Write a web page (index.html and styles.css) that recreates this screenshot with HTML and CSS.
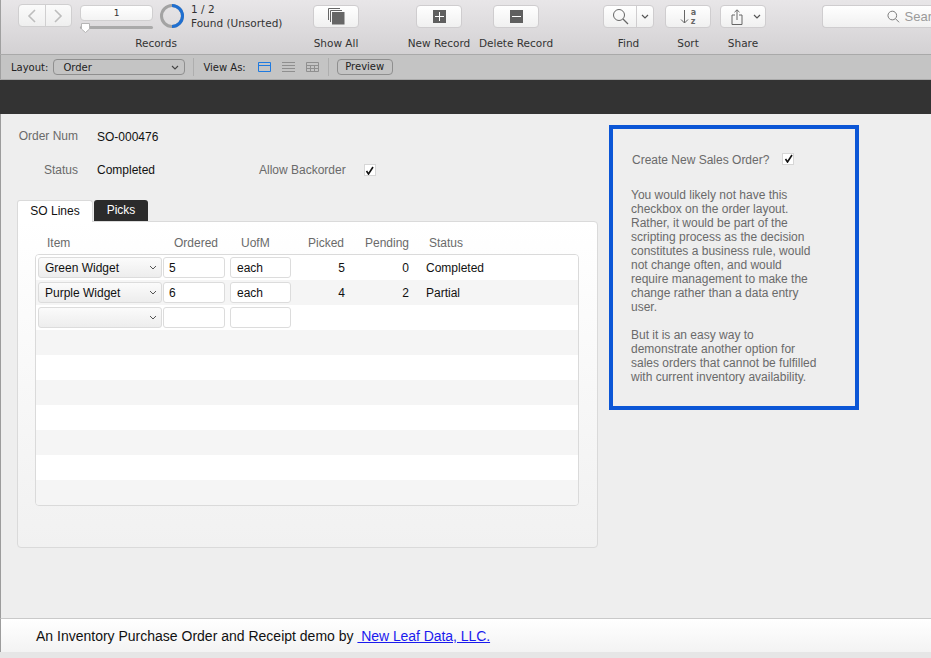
FILE: index.html

```html
<!DOCTYPE html>
<html lang="en">
<head>
  <meta charset="UTF-8">
  <meta name="viewport" content="width=device-width, initial-scale=1.0">
  <title>Order</title>
  <link rel="stylesheet" href="styles.css">
</head>
<body>
  <header class="toolbar">
    <div class="tool tool-records">
      <div class="records-row">
        <div class="nav-btns">
          <span class="nav-half">
            <svg width="10" height="14" viewBox="0 0 10 14"><path d="M8 1 L2 7 L8 13" fill="none" stroke="#bdbdbd" stroke-width="1.6"/></svg>
          </span>
          <span class="nav-half">
            <svg width="10" height="14" viewBox="0 0 10 14"><path d="M2 1 L8 7 L2 13" fill="none" stroke="#bdbdbd" stroke-width="1.6"/></svg>
          </span>
        </div>
        <div class="slider-box">
          <div class="rec-input">1</div>
          <div class="slider-track">
            <svg class="slider-thumb" width="11" height="10" viewBox="0 0 11 10"><path d="M1.5 0.5 H9.5 V6 L5.5 9.5 L1.5 6 Z" fill="#fff" stroke="#b5b5b5" stroke-width="1"/></svg>
          </div>
        </div>
        <svg class="ring" width="24" height="24" viewBox="0 0 24 24">
          <circle cx="12" cy="12" r="10.5" fill="none" stroke="#a3a3a3" stroke-width="3"/>
          <path d="M12 1.5 A10.5 10.5 0 0 1 12 22.5" fill="none" stroke="#1f6fd0" stroke-width="3"/>
        </svg>
        <div class="found">1 / 2<br>Found (Unsorted)</div>
      </div>
      <div class="tool-label">Records</div>
    </div>

    <div class="tool tool-showall">
      <div class="btn">
        <svg width="17" height="17" viewBox="0 0 17 17">
          <path d="M0.5 12 V0.5 H12 M2.5 14 V2.5 H14" fill="none" stroke="#666" stroke-width="1"/>
          <rect x="4" y="4" width="12.5" height="12.5" fill="#666"/>
        </svg>
      </div>
      <div class="tool-label">Show All</div>
    </div>

    <div class="tool tool-new">
      <div class="btn">
        <svg width="13" height="13" viewBox="0 0 13 13"><rect width="13" height="13" fill="#5f5f5f"/><path d="M6.5 2 V11 M2 6.5 H11" stroke="#fff" stroke-width="1"/></svg>
      </div>
      <div class="tool-label">New Record</div>
    </div>

    <div class="tool tool-delete">
      <div class="btn">
        <svg width="13" height="13" viewBox="0 0 13 13"><rect width="13" height="13" fill="#5f5f5f"/><path d="M2 6.5 H11" stroke="#fff" stroke-width="1"/></svg>
      </div>
      <div class="tool-label">Delete Record</div>
    </div>

    <div class="tool tool-find">
      <div class="btn btn-split">
        <span class="find-main">
          <svg width="17" height="17" viewBox="0 0 17 17"><circle cx="7" cy="7" r="5.5" fill="none" stroke="#666" stroke-width="1"/><path d="M11 11 L16 16" stroke="#666" stroke-width="1.2"/></svg>
        </span>
        <span class="find-more">
          <svg width="8" height="5" viewBox="0 0 8 5"><path d="M1 1 L4 4 L7 1" fill="none" stroke="#555" stroke-width="1.2"/></svg>
        </span>
      </div>
      <div class="tool-label">Find</div>
    </div>

    <div class="tool tool-sort">
      <div class="btn sort-btn">
        <svg width="9" height="14" viewBox="0 0 9 14"><path d="M4.5 0 V13 M1 9.5 L4.5 13 L8 9.5" fill="none" stroke="#666" stroke-width="1"/></svg>
        <span class="sort-az">a<br>z</span>
      </div>
      <div class="tool-label">Sort</div>
    </div>

    <div class="tool tool-share">
      <div class="btn share-btn">
        <svg width="12" height="16" viewBox="0 0 12 16"><path d="M4 6 H1 V15.5 H11 V6 H8 M6 11 V1 M3.5 3.2 L6 0.8 L8.5 3.2" fill="none" stroke="#666" stroke-width="1"/></svg>
        <svg width="8" height="5" viewBox="0 0 8 5"><path d="M1 1 L4 4 L7 1" fill="none" stroke="#555" stroke-width="1.2"/></svg>
      </div>
      <div class="tool-label">Share</div>
    </div>

    <div class="search-box">
      <svg width="13" height="13" viewBox="0 0 13 13"><circle cx="5.5" cy="5.5" r="4.5" fill="none" stroke="#777" stroke-width="1"/><path d="M9 9 L12.5 12.5" stroke="#777" stroke-width="1"/></svg>
      <span>Sear</span>
    </div>
  </header>

  <div class="layoutbar">
    <span class="bar-text">Layout:</span>
    <div class="layout-select">
      <span>Order</span>
      <svg width="8" height="5" viewBox="0 0 8 5"><path d="M1 1 L4 4 L7 1" fill="none" stroke="#444" stroke-width="1.1"/></svg>
    </div>
    <span class="bar-sep"></span>
    <span class="bar-text">View As:</span>
    <svg class="view-icon view-form" width="13" height="10" viewBox="0 0 13 10"><path d="M0.5 0.5 H12.5 V9.5 H0.5 Z M0.5 3.5 H12.5" fill="none" stroke="#1f7ae0" stroke-width="1"/></svg>
    <svg class="view-icon" width="13" height="10" viewBox="0 0 13 10"><path d="M0 0.5 H13 M0 3.5 H13 M0 6.5 H13 M0 9.5 H13" stroke="#8f8f8f" stroke-width="1"/></svg>
    <svg class="view-icon" width="13" height="10" viewBox="0 0 13 10"><path d="M0.5 0.5 H12.5 V9.5 H0.5 Z M0.5 3.5 H12.5 M0.5 6.5 H12.5 M4.5 3.5 V9.5 M8.5 3.5 V9.5" fill="none" stroke="#8f8f8f" stroke-width="1"/></svg>
    <span class="bar-sep bar-sep-2"></span>
    <span class="preview-btn">Preview</span>
  </div>

  <div class="dark-band"></div>

  <main class="content">
    <section class="order">
      <div class="field-row row-num">
        <span class="field-label">Order Num</span>
        <span class="field-value">SO-000476</span>
      </div>
      <div class="field-row row-status">
        <span class="field-label">Status</span>
        <span class="field-value status-value">Completed</span>
        <span class="field-label backorder-label">Allow Backorder</span>
        <span class="check"><svg width="9" height="9" viewBox="0 0 9 9"><path d="M1.5 5 L3.5 8 L8 1" fill="none" stroke="#111" stroke-width="1.6"/></svg></span>
      </div>

      <div class="tabs">
        <span class="tab tab-active">SO Lines</span>
        <span class="tab tab-dark">Picks</span>
      </div>

      <div class="tab-panel">
        <div class="line-head">
          <span class="col-item head-item">Item</span>
          <span class="col-ordered head-ordered">Ordered</span>
          <span class="col-uom head-uom">UofM</span>
          <span class="col-picked head-picked">Picked</span>
          <span class="col-pending">Pending</span>
          <span class="col-status head-status">Status</span>
        </div>
        <div class="portal">
          <div class="line">
            <div class="col-item line-select"><span>Green Widget</span><svg width="8" height="5" viewBox="0 0 8 5"><path d="M1 1 L4 4 L7 1" fill="none" stroke="#555" stroke-width="1"/></svg></div>
            <div class="col-ordered line-input">5</div>
            <div class="col-uom line-input">each</div>
            <div class="col-picked">5</div>
            <div class="col-pending">0</div>
            <div class="col-status">Completed</div>
          </div>
          <div class="line">
            <div class="col-item line-select"><span>Purple Widget</span><svg width="8" height="5" viewBox="0 0 8 5"><path d="M1 1 L4 4 L7 1" fill="none" stroke="#555" stroke-width="1"/></svg></div>
            <div class="col-ordered line-input">6</div>
            <div class="col-uom line-input">each</div>
            <div class="col-picked">4</div>
            <div class="col-pending">2</div>
            <div class="col-status">Partial</div>
          </div>
          <div class="line">
            <div class="col-item line-select"><span></span><svg width="8" height="5" viewBox="0 0 8 5"><path d="M1 1 L4 4 L7 1" fill="none" stroke="#555" stroke-width="1"/></svg></div>
            <div class="col-ordered line-input"></div>
            <div class="col-uom line-input"></div>
          </div>
          <div class="line"></div>
          <div class="line"></div>
          <div class="line"></div>
          <div class="line"></div>
          <div class="line"></div>
          <div class="line"></div>
          <div class="line"></div>
        </div>
      </div>
    </section>

    <aside class="note">
      <div class="note-head">
        <span>Create New Sales Order?</span>
        <span class="check"><svg width="9" height="9" viewBox="0 0 9 9"><path d="M1.5 5 L3.5 8 L8 1" fill="none" stroke="#111" stroke-width="1.6"/></svg></span>
      </div>
      <p>You would likely not have this<br>checkbox on the order layout.<br>Rather, it would be part of the<br>scripting process as the decision<br>constitutes a business rule, would<br>not change often, and would<br>require management to make the<br>change rather than a data entry<br>user.</p>
      <p>But it is an easy way to<br>demonstrate another option for<br>sales orders that cannot be fulfilled<br>with current inventory availability.</p>
    </aside>
  </main>

  <footer class="footer">
    An Inventory Purchase Order and Receipt demo by <a href="#">&nbsp;New Leaf Data, LLC.</a>
  </footer>
  <div class="bottom-strip"></div>
</body>
</html>
```

FILE: styles.css

```css
* {
  box-sizing: border-box;
}

html, body {
  margin: 0;
  height: 100%;
}

body {
  width: 931px;
  height: 658px;
  overflow: hidden;
  font-family: "Liberation Sans", Arial, sans-serif;
  font-size: 12px;
  background: #eeeeee;
  color: #111;
}

/* top toolbar */
.toolbar {
  display: flex;
  height: 55px;
  padding-top: 5px;
  background: linear-gradient(to bottom, #e8e6e8, #d3d1d3);
  border-bottom: 1px solid #a9a9a9;
  box-shadow: inset 1px 0 0 #a0a0a0;
  font-family: "DejaVu Sans", sans-serif;
  font-size: 10.5px;
  color: #333;
  white-space: nowrap;
}

.tool {
  display: flex;
  flex-direction: column;
  align-items: center;
  flex: none;
}

.tool-label {
  margin-top: 9px;
  line-height: 13px;
  text-align: center;
}

.tool-records {
  width: 276px;
  margin-left: 18px;
  align-items: stretch;
}

.records-row {
  display: flex;
  height: 23px;
}

.nav-btns {
  display: flex;
  width: 54px;
  height: 23px;
  margin-top: -1px;
  background: linear-gradient(to bottom, #fbfbfb, #efefef);
  border: 1px solid #d0cfd0;
  border-radius: 4px;
}

.nav-half {
  flex: 1;
  display: flex;
  align-items: center;
  justify-content: center;
}

.nav-half + .nav-half {
  border-left: 1px solid #d0cfd0;
}

.slider-box {
  width: 73px;
  margin-left: 8px;
}

.rec-input {
  height: 16px;
  background: linear-gradient(to bottom, #ffffff, #f3f3f3);
  border: 1px solid #d0cfd0;
  border-radius: 4px;
  font-size: 9px;
  line-height: 14px;
  text-align: center;
}

.slider-track {
  position: relative;
  height: 3px;
  margin-top: 5px;
  background: #aaaaaa;
  border-radius: 2px;
}

.slider-thumb {
  position: absolute;
  left: 0;
  top: -3px;
}

.ring {
  margin: -1px 0 0 7px;
  flex: none;
}

.found {
  margin: -3px 0 0 7px;
  line-height: 14px;
}

.btn {
  display: flex;
  align-items: center;
  justify-content: center;
  width: 46px;
  height: 23px;
  background: linear-gradient(to bottom, #ffffff, #f0f0f0);
  border: 1px solid #cfcdcf;
  border-radius: 4px;
}

.tool-showall {
  width: 46px;
  margin-left: 19px;
}

.tool-new {
  width: 46px;
  margin-left: 57px;
}

.tool-delete {
  width: 46px;
  margin-left: 31px;
}

.tool-find {
  width: 51px;
  margin-left: 64px;
}

.tool-sort {
  width: 46px;
  margin-left: 11px;
}

.tool-share {
  width: 46px;
  margin-left: 9px;
}

.btn-split {
  width: 51px;
  justify-content: flex-start;
}

.find-main {
  display: flex;
  align-items: center;
  justify-content: center;
  width: 33px;
  height: 100%;
  border-right: 1px solid #cfcdcf;
}

.find-more {
  flex: 1;
  display: flex;
  align-items: center;
  justify-content: center;
}

.sort-btn {
  gap: 2px;
}

.sort-az {
  font-size: 8px;
  font-weight: bold;
  line-height: 9px;
  color: #666;
}

.share-btn {
  justify-content: flex-start;
  gap: 10px;
  padding-left: 10px;
}

.search-box {
  display: flex;
  align-items: center;
  flex: none;
  gap: 5px;
  width: 110px;
  height: 23px;
  margin-left: 56px;
  padding-left: 64px;
  background: linear-gradient(to bottom, #ffffff, #f0f0f0);
  border: 1px solid #cfcdcf;
  border-right: none;
  border-radius: 4px 0 0 4px;
  font-family: "Liberation Sans", sans-serif;
  font-size: 13px;
  color: #9a9a9a;
}

/* layout bar */
.layoutbar {
  display: flex;
  align-items: center;
  height: 25px;
  padding-left: 11px;
  background: #c4c4c4;
  border-bottom: 1px solid #aaaaaa;
  box-shadow: inset 1px 0 0 #a0a0a0;
  font-family: "DejaVu Sans", sans-serif;
  font-size: 10px;
  color: #222;
  white-space: nowrap;
}

.layout-select {
  display: flex;
  align-items: center;
  justify-content: space-between;
  width: 132px;
  height: 16px;
  margin-left: 5px;
  padding: 0 5px 0 9px;
  border: 1px solid #8f8f8f;
  border-radius: 4px;
}

.bar-sep {
  width: 1px;
  height: 18px;
  margin: 0 9px 0 8px;
  background: #aeaeae;
}

.bar-sep-2 {
  margin: 0 8px 0 9px;
}

.view-icon {
  margin-left: 11px;
}

.view-form {
  margin-left: 12px;
}

.preview-btn {
  width: 56px;
  height: 16px;
  line-height: 14px;
  text-align: center;
  border: 1px solid #8f8f8f;
  border-radius: 4px;
}

.dark-band {
  height: 34px;
  background: #333333;
}

/* order form */
.content {
  display: flex;
  height: 504px;
  border-left: 1px solid #9c9c9c;
}

.order {
  flex: none;
  width: 581px;
  margin-left: 16px;
}

.field-row {
  display: flex;
  align-items: center;
  height: 14px;
  color: #111;
}

.row-num {
  margin-top: 15px;
}

.row-num .field-value {
  margin-top: 2px;
}

.row-status {
  margin-top: 20px;
}

.field-label {
  width: 61px;
  margin-right: 19px;
  text-align: right;
  color: #6a6a6a;
  white-space: nowrap;
}

.field-value {
  width: 90px;
  white-space: nowrap;
}

.status-value {
  width: 162px;
}

.backorder-label {
  width: auto;
  margin-right: 18px;
}

.check {
  display: flex;
  align-items: center;
  justify-content: center;
  flex: none;
  width: 12px;
  height: 12px;
  background: #fff;
  border: 1px solid #d6d6d6;
}

.tabs {
  display: flex;
  align-items: flex-start;
  gap: 1px;
  height: 22px;
  margin-top: 23px;
  position: relative;
  z-index: 1;
}

.tab {
  height: 21px;
  line-height: 21px;
  text-align: center;
  border-radius: 3px 3px 0 0;
}

.tab-active {
  width: 76px;
  height: 22px;
  background: #fff;
  border: 1px solid #dadada;
  border-bottom: none;
  color: #111;
}

.tab-dark {
  width: 54px;
  background: #2b2b2b;
  color: #fff;
}

.tab-panel {
  height: 327px;
  margin-top: -1px;
  padding: 11px 18px 0 17px;
  background: linear-gradient(to bottom, #ffffff, #f1f1f1);
  border: 1px solid #dadada;
  border-radius: 0 4px 4px 4px;
}

.line-head,
.line {
  display: flex;
  align-items: center;
  height: 25px;
  white-space: nowrap;
}

.line-head {
  height: 19px;
  margin-bottom: 2px;
  padding-left: 3px;
  color: #6a6a6a;
}

.col-item {
  flex: none;
  width: 124px;
}

.col-ordered {
  flex: none;
  width: 62px;
  margin-left: 1px;
}

.col-uom {
  flex: none;
  width: 61px;
  margin-left: 5px;
}

.col-picked {
  flex: none;
  width: 54px;
  text-align: right;
}

.col-pending {
  flex: none;
  width: 64px;
  text-align: right;
}

.col-status {
  flex: none;
  margin-left: 17px;
}

.head-item {
  padding-left: 9px;
}

.head-ordered {
  text-align: center;
  padding-left: 4px;
}

.head-uom {
  padding-left: 11px;
}

.head-picked {
  padding-right: 1px;
}

.head-status {
  margin-left: 20px;
}

.portal {
  height: 252px;
  background: #f5f5f5;
  border: 1px solid #dadada;
  border-radius: 4px;
  overflow: hidden;
}

.line {
  padding-left: 2px;
  background: #f5f5f5;
}

.line:nth-child(odd) {
  background: #ffffff;
}

.line-select {
  display: flex;
  align-items: center;
  justify-content: space-between;
  height: 21px;
  padding: 0 4px 0 6px;
  background: linear-gradient(to bottom, #fbfbfb, #ededed);
  border: 1px solid #dcdcdc;
  border-radius: 3px;
  color: #111;
}

.line-input {
  height: 21px;
  padding-left: 6px;
  line-height: 20px;
  background: #fff;
  border: 1px solid #dcdcdc;
  border-radius: 3px;
}

.line .col-ordered {
  padding-left: 5px;
}

/* help box */
.note {
  flex: none;
  width: 250px;
  height: 285px;
  margin: 11px 0 0 11px;
  padding: 24px 18px 0 18px;
  border: 4px solid #0b56d6;
  color: #6a6a6a;
  line-height: 14px;
  white-space: nowrap;
}

.note-head {
  display: flex;
  align-items: center;
  gap: 13px;
  padding-left: 1px;
}

.note-head .check {
  margin-top: -3px;
}

.note p {
  margin: 14px 0 0;
}

.note-head + p {
  margin-top: 21px;
}

.footer {
  height: 34px;
  padding-left: 35px;
  line-height: 35px;
  font-size: 14px;
  background: linear-gradient(to bottom, #ffffff, #f3f3f3);
  border-top: 1px solid #c9c9c9;
  border-left: 1px solid #9c9c9c;
  color: #111;
}

.footer a {
  color: #1a1aee;
  letter-spacing: -0.06px;
}

.bottom-strip {
  height: 6px;
  background: #e6e6e6;
}
```
